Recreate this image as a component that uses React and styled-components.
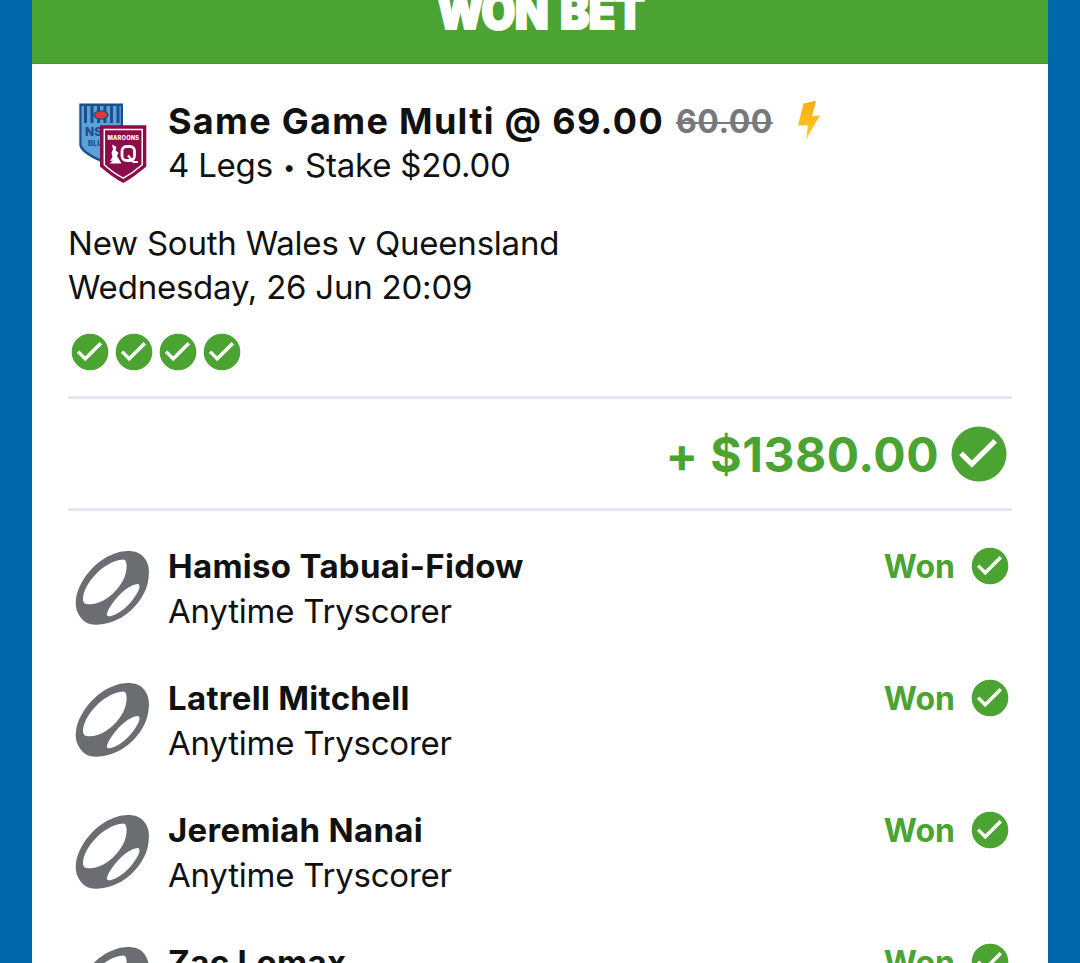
import React from 'react';
import styled, { createGlobalStyle } from 'styled-components';

const GlobalStyle = createGlobalStyle`
  * {
    box-sizing: border-box;
  }
  body {
    margin: 0;
    background: #0067ab;
    font-family: Inter, 'Liberation Sans', sans-serif;
    color: #111;
  }
`;

const Page = styled.div`
  height: 963px;
  padding: 0 32px;
  overflow: hidden;
  background: #0067ab;
`;

const Card = styled.main`
  height: 100%;
  overflow: hidden;
  background: #fff;
`;

const Banner = styled.header`
  display: flex;
  align-items: flex-end;
  justify-content: center;
  height: 64px;
  padding-bottom: 19px;
  overflow: hidden;
  background: #4ba332;
  border-bottom: 1px solid #4f9140;
`;

const BannerTitle = styled.h1`
  margin: 0;
  font-size: 49px;
  line-height: 64px;
  font-weight: 900;
  letter-spacing: -1px;
  word-spacing: 5px;
  white-space: nowrap;
  color: #fff;
  transform: scaleX(0.9);
  -webkit-text-stroke: 2px #fff;
`;

const Content = styled.div`
  padding: 35px 36px 0;
`;

const Row = styled.div`
  display: flex;
  gap: 12px;
  height: 88px;
`;

const Details = styled.div`
  flex: 1;
`;

const Line = styled.div`
  font-size: 33px;
  line-height: 44px;
  letter-spacing: -0.22px;
  white-space: nowrap;
`;

const Dot = styled.span`
  margin: 0 1px;
  font-size: 22px;
  vertical-align: 2px;
  line-height: 1;
`;

const Title = styled(Line)`
  margin-bottom: 2px;
  font-weight: 700;
  line-height: 42px;
  letter-spacing: 0.3px;
`;

const Heading = styled(Title)`
  display: flex;
  align-items: center;
  height: 44px;
  margin: 0;
  font-size: 36px;
  letter-spacing: 1.3px;
`;

const OldOdds = styled.s`
  margin: 2px 0 0 12px;
  font-size: 32px;
  letter-spacing: 0.5px;
  color: #77787c;
  text-decoration-thickness: 2px;
`;

const Match = styled.div`
  margin-top: 34px;
`;

const Ticks = styled.div`
  display: flex;
  margin-top: 21px;
`;

const Divider = styled.hr`
  height: 3px;
  margin: ${(p) => p.$top || 0} 0 0;
  border: 0;
  background: #e6e6f0;
`;

const Payout = styled.div`
  display: flex;
  align-items: center;
  justify-content: flex-end;
  gap: 7px;
  height: 109px;
  font-size: 48px;
  font-weight: 700;
  letter-spacing: 0.5px;
  color: #4ba332;
`;

const Label = styled.span`
  padding-top: 2px;
`;

const Legs = styled.div`
  display: flex;
  flex-direction: column;
  gap: 44px;
  padding-top: 34px;
`;

const Result = styled(Title)`
  display: flex;
  align-items: center;
  gap: 13px;
  height: 44px;
  margin-top: -1px;
  font-size: 32px;
  letter-spacing: 0;
  color: #4ba332;
`;

const Svg = styled.svg`
  display: block;
  flex: none;
  width: ${(p) => p.$size}px;
  height: ${(p) => p.$size}px;
`;

const BoltSvg = styled.svg`
  width: 24px;
  height: 40px;
  margin: -2px 0 0 24px;
`;

const Tick = ({ size = 44 }) => (
  <Svg $size={size} viewBox="0 0 24 24">
    <circle cx="12" cy="12" r="10" fill="#4ba332" />
    <path d="M5.5 11.8 9.4 15.7 17.9 7.2" fill="none" stroke="#fff" strokeWidth="1.9" />
  </Svg>
);

const Ball = () => (
  <Svg $size={88} viewBox="0 0 88 88">
    <path
      fill="#6b6d72"
      fillRule="evenodd"
      d="M60 6C67 6 72.500 8 76 12.500C79.800 17 81.200 22.500 80.900 29C80.500 38 78 46.500 72 55C66 63.500 58.500 70 50.500 74C43 78 35.500 79.700 28.500 79.700C22 80 16.500 77.500 12.800 72.800C9 68 7.500 62.500 7.700 57C8 50 10 43.500 14.300 36.500C19 28 26.500 20 35.500 14C43 9.500 52 6 60 6Z
      M55.500 14.500C50 14.500 44 17 38.500 20.500C31 25 24.500 32 19.800 39.500C16.500 45 14.800 50.500 15 54.500C15.200 58 17 59.300 21.500 59.300C27 59.300 33 57.300 39 53.300C46 48.500 51.500 42 55 35.500C57.500 30.500 58.800 25 58.600 20.500C58.500 16.500 57.500 14.500 55.500 14.500Z
      M69.500 39C66 39 59.500 42.500 54 47.500C47.500 53.500 42 61 39.700 66.500C38 70.500 39 71.800 43 71C49 69.500 56.500 64.500 62.500 57.500C67.500 51.500 71.500 45 71.500 41.500C71.500 40 71 39 69.500 39Z"
    />
  </Svg>
);

const Bolt = () => (
  <BoltSvg viewBox="0 0 24 40">
    <defs>
      <linearGradient id="bolt" x1="0" y1="0" x2="0" y2="1">
        <stop offset="0" stopColor="#fca91c" />
        <stop offset="1" stopColor="#fdd017" />
      </linearGradient>
    </defs>
    <path d="M6.5 3.5 19 .8 15 16.5 23 15.2 9 39.5 11 25.3 1 25.5Z" fill="url(#bolt)" />
  </BoltSvg>
);

const Crests = () => (
  <Svg $size={88} viewBox="0 0 88 88" fontFamily="Inter, sans-serif" fontWeight="800">
    <path d="M11.300 4.500H55V49Q54 55 33 63Q12 54 11.300 46Z" fill="#1d4f88" />
    <path d="M13.500 7H52.800V48Q52 53 33 60.500Q14.500 52 13.500 45Z" fill="#5ba2dd" />
    <path d="M17.500 7V24M24 7V24M30.500 7V24M37 7V24M43.500 7V24M50 7V24" stroke="#1d4f88" strokeWidth="3" />
    <ellipse cx="33" cy="16" rx="7.500" ry="4.800" fill="#1d4f88" />
    <ellipse cx="33" cy="16" rx="6" ry="3.500" fill="#e33a38" />
    <text x="17" y="37" fontSize="12" fill="#1d4f88">NSW</text>
    <text x="20" y="46.500" fontSize="7.500" fill="#1d4f88">BLUES</text>
    <path d="M32 26.300H78.300V67.500Q66 78 55.300 84Q44 78 32 67.500Z" fill="#8b0c49" />
    <path
      d="M36.300 30.500H74.200V65.800Q65 74 55.300 79.200Q45 74 36.300 65.800Z"
      fill="none"
      stroke="#fff"
      strokeWidth="1.500"
    />
    <text x="39.500" y="40.500" fontSize="5.700" textLength="31.500" fill="#fff">MAROONS</text>
    <path
      d="M44 45.500 48.500 48 47.500 51 50.500 54 49 57 51.500 61 53.500 64.500H41.500L45 61.500 42 62 44.500 58 43.500 54 45 50Z"
      fill="#fff"
    />
    <rect x="54" y="47.500" width="12.500" height="14" rx="4.500" fill="none" stroke="#fff" strokeWidth="2.800" />
    <path d="M60 56.500 65.500 63H70" fill="none" stroke="#fff" strokeWidth="2.200" />
  </Svg>
);

const legs = ['Hamiso Tabuai-Fidow', 'Latrell Mitchell', 'Jeremiah Nanai', 'Zac Lomax'];

const App = () => (
  <Page>
    <GlobalStyle />
    <Card>
      <Banner>
        <BannerTitle>WON BET</BannerTitle>
      </Banner>
      <Content>
        <Row>
          <Crests />
          <Details>
            <Heading>
              Same Game Multi @ 69.00
              <OldOdds>60.00</OldOdds>
              <Bolt />
            </Heading>
            <Line>
              4 Legs <Dot>•</Dot> Stake $20.00
            </Line>
          </Details>
        </Row>
        <Match>
          <Line>New South Wales v Queensland</Line>
          <Line>Wednesday, 26 Jun 20:09</Line>
        </Match>
        <Ticks>
          {legs.map((name) => (
            <Tick key={name} />
          ))}
        </Ticks>
        <Divider $top="22px" />
        <Payout>
          <Label>+ $1380.00</Label>
          <Tick size={66} />
        </Payout>
        <Divider />
        <Legs>
          {legs.map((name) => (
            <Row key={name}>
              <Ball />
              <Details>
                <Title>{name}</Title>
                <Line>Anytime Tryscorer</Line>
              </Details>
              <Result>
                <Label>Won</Label>
                <Tick />
              </Result>
            </Row>
          ))}
        </Legs>
      </Content>
    </Card>
  </Page>
);

export default App;
